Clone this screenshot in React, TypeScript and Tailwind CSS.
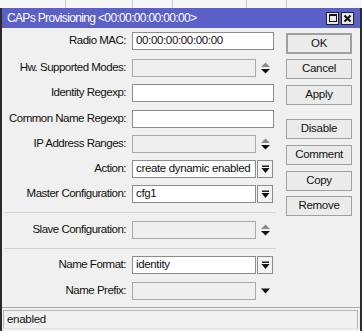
import React from 'react'

const font = { fontFamily: '"Liberation Sans", Arial, sans-serif' }

function Spinner() {
  return (
    <svg width="11" height="12" viewBox="0 0 11 12" className="ml-[4px]">
      <polygon points="1,5 10,5 5.5,0.5" fill="#8a8a8a" />
      <polygon points="1,7 10,7 5.5,11.5" fill="#111" />
    </svg>
  )
}

function DropButton() {
  return (
    <div className="ml-[1px] flex h-[18px] w-[16px] items-center justify-center border border-[#8c8c8c] bg-[#f4f4f4]">
      <svg width="9" height="9" viewBox="0 0 9 9">
        <rect x="1" y="0.5" width="7" height="1.4" fill="#111" />
        <polygon points="0.5,3 8.5,3 4.5,8" fill="#111" />
      </svg>
    </div>
  )
}

function Field({
  label,
  value,
  kind,
  disabled,
  className,
}: {
  label: string
  value?: string
  kind: 'text' | 'spin' | 'drop' | 'arrow'
  disabled?: boolean
  className?: string
}) {
  return (
    <div className={`flex h-[18px] items-center ${className ?? ''}`}>
      <div className="w-[124px] text-right text-[11.5px] tracking-[-0.5px] text-[#111]">
        {label}:
      </div>
      <div
        className={`ml-[6px] flex h-[18px] items-center border px-[3px] text-[11.5px] tracking-[-0.35px] text-[#111] ${
          disabled ? 'border-[#a8a8a8] bg-[#efefef]' : 'border-[#8c8c8c] bg-white'
        } ${kind === 'text' ? 'w-[142px]' : 'w-[124px]'}`}
      >
        {value}
      </div>
      {kind === 'spin' && <Spinner />}
      {kind === 'drop' && <DropButton />}
      {kind === 'arrow' && (
        <svg width="11" height="8" viewBox="0 0 11 8" className="ml-[4px]">
          <polygon points="1,1.5 10,1.5 5.5,6.5" fill="#111" />
        </svg>
      )}
    </div>
  )
}

function Btn({ children, className }: { children: React.ReactNode; className?: string }) {
  return (
    <div
      className={`flex w-[66px] items-center justify-center border border-[#a0a0a0] bg-[#ebebeb] text-[11.5px] tracking-[-0.3px] text-[#111] ${className ?? ''}`}
    >
      {children}
    </div>
  )
}

export default function App() {
  return (
    <div style={font} className="relative h-[331px] w-[362px] overflow-hidden bg-[#f0f0f0]">
      <div className="flex h-[8px] bg-[#f6f6f6]">
        <div className="w-[66px] border-r border-[#c8c8c8]" />
        <div className="w-[67px] border-r border-[#c8c8c8]" />
        <div className="w-[40px] border-r border-[#c8c8c8]" />
        <div className="w-[74px] border-r border-[#c8c8c8]" />
        <div className="w-[40px] border-r border-[#c8c8c8]" />
      </div>
      <div className="flex h-[323px] flex-col border-x-2 border-[#2a2a2a]">
        <div className="flex h-[20px] items-center bg-[#5b5fc8] pl-[5px] pr-[6px]">
          <span className="text-[12px] tracking-[-0.65px] text-white">
            CAPs Provisioning &lt;00:00:00:00:00:00&gt;
          </span>
          <div className="ml-auto flex gap-[2px]">
            <div className="flex h-[13px] w-[13px] items-center justify-center border border-[#222] bg-[#e8e8e8]">
              <div className="h-[8px] w-[8px] border border-t-2 border-[#111]" />
            </div>
            <div className="flex h-[13px] w-[13px] items-center justify-center border border-[#222] bg-[#e8e8e8]">
              <svg width="9" height="9" viewBox="0 0 9 9">
                <path d="M1.5 1.5 L7.5 7.5 M7.5 1.5 L1.5 7.5" stroke="#111" strokeWidth="2" />
              </svg>
            </div>
          </div>
        </div>
        <div className="flex flex-1">
          <div className="flex w-[274px] flex-col pt-[4px]">
            <Field label="Radio MAC" value="00:00:00:00:00:00" kind="text" />
            <Field label="Hw. Supported Modes" kind="spin" disabled className="mt-[9px]" />
            <Field label="Identity Regexp" kind="text" className="mt-[7px]" />
            <Field label="Common Name Regexp" kind="text" className="mt-[8px]" />
            <Field label="IP Address Ranges" kind="spin" disabled className="mt-[7px]" />
            <Field label="Action" value="create dynamic enabled" kind="drop" className="mt-[7px]" />
            <Field label="Master Configuration" value="cfg1" kind="drop" className="mt-[7px]" />
            <div className="mt-[9px] ml-[2px] h-[1px] w-[272px] bg-[#d4d4d4]" />
            <Field label="Slave Configuration" kind="spin" disabled className="mt-[8px]" />
            <div className="mt-[9px] ml-[2px] h-[1px] w-[272px] bg-[#d4d4d4]" />
            <Field label="Name Format" value="identity" kind="drop" className="mt-[7px]" />
            <Field label="Name Prefix" kind="arrow" disabled className="mt-[8px]" />
          </div>
          <div className="ml-[10px] flex flex-col pt-[5px]">
            <Btn className="h-[21px] border-2 border-[#111]">OK</Btn>
            <Btn className="mt-[5px] h-[20px]">Cancel</Btn>
            <Btn className="mt-[6px] h-[20px]">Apply</Btn>
            <Btn className="mt-[14px] h-[20px]">Disable</Btn>
            <Btn className="mt-[6px] h-[20px]">Comment</Btn>
            <Btn className="mt-[6px] h-[20px]">Copy</Btn>
            <Btn className="mt-[5px] h-[20px]">Remove</Btn>
          </div>
        </div>
        <div className="h-[1px] bg-[#a8a8a8]" />
        <div className="flex h-[23px] items-start pt-[2px] pl-[1px] pr-[2px]">
          <div className="flex h-[19px] flex-1 items-center border border-[#b4b4b4] border-b-[#e4e4e4] pl-[3px] text-[11.5px] tracking-[-0.3px] text-[#111]">
            enabled
          </div>
        </div>
      </div>
    </div>
  )
}
